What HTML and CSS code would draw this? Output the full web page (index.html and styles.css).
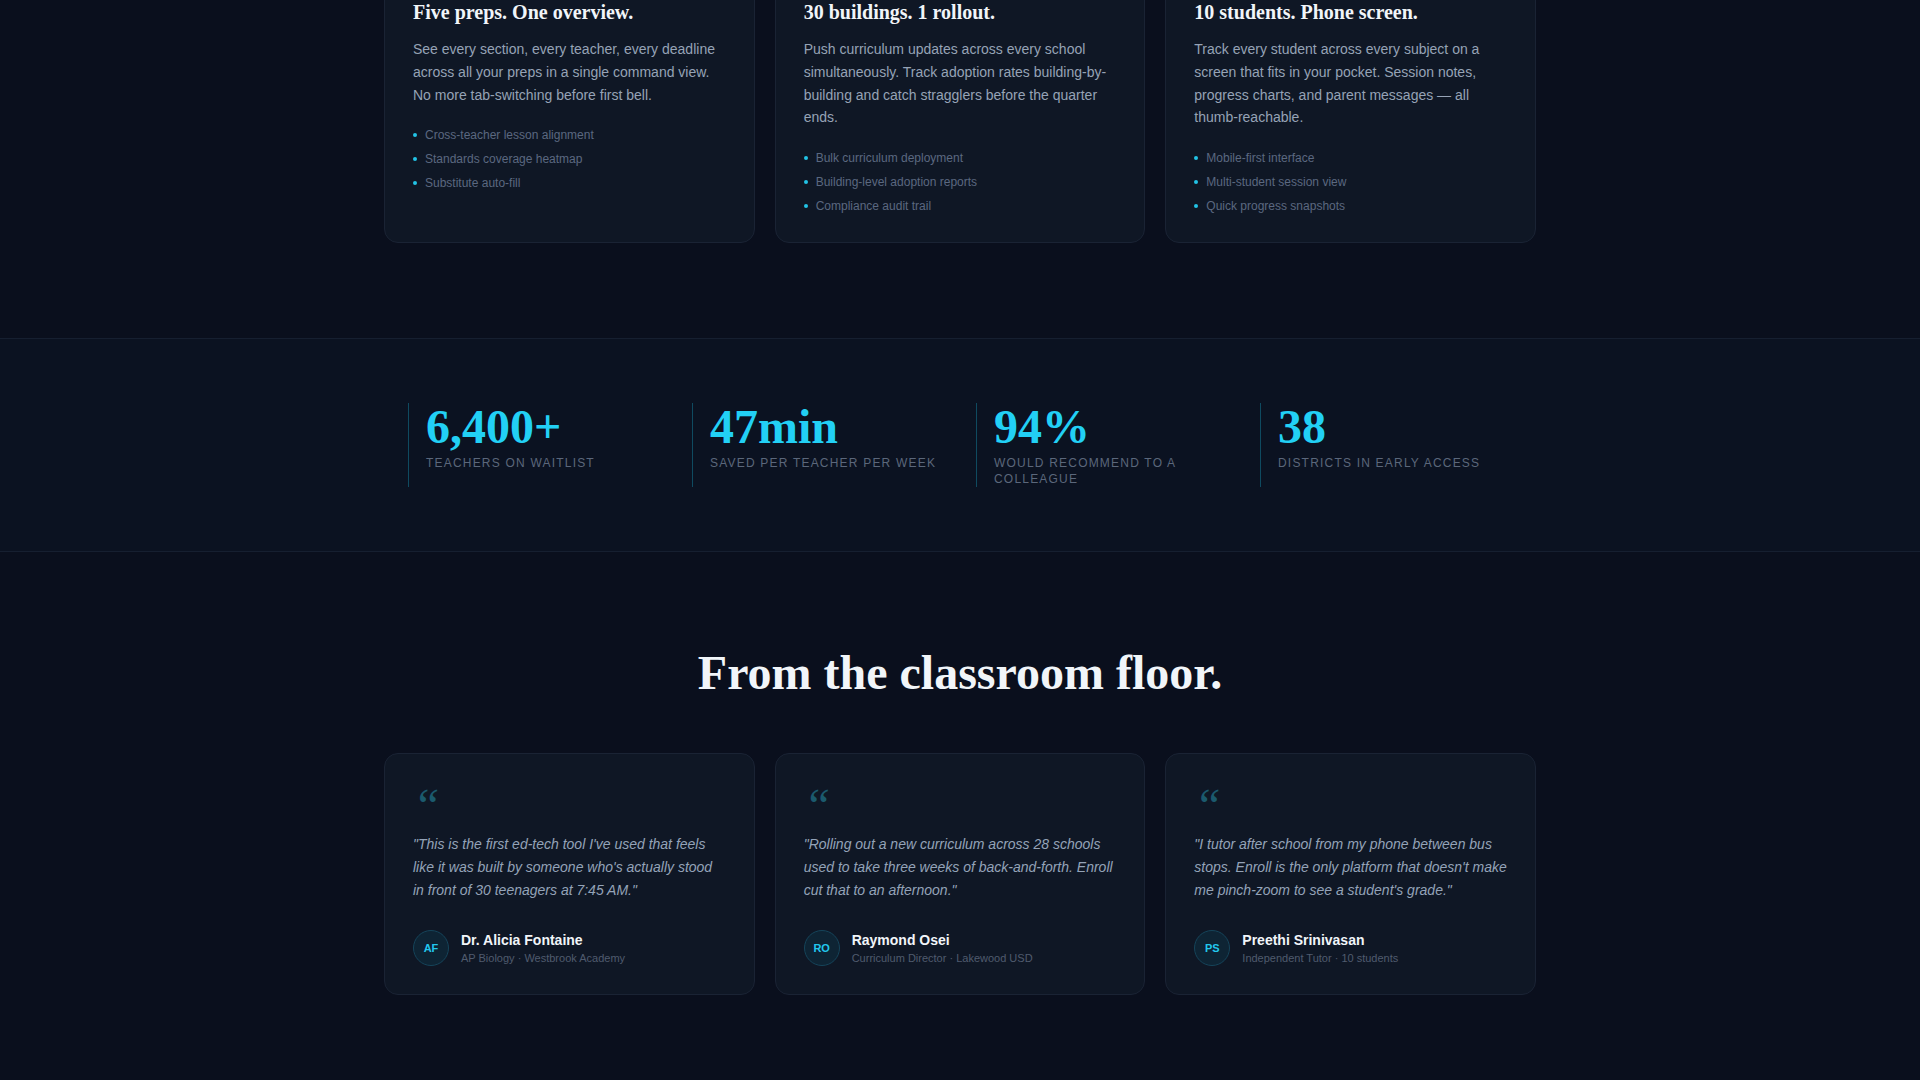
FILE: index.html
```html
<!DOCTYPE html>
<html lang="en">
<head>
<meta charset="utf-8">
<title>Enroll</title>
<link rel="stylesheet" href="styles.css">
</head>
<body>
<section class="features">
  <div class="container grid3">
    <div class="card fcard">
      <h3 class="card-title">Five preps. One overview.</h3>
      <p class="card-text">See every section, every teacher, every deadline across all your preps in a single command view. No more tab-switching before first bell.</p>
      <ul class="points">
        <li>Cross-teacher lesson alignment</li>
        <li>Standards coverage heatmap</li>
        <li>Substitute auto-fill</li>
      </ul>
    </div>
    <div class="card fcard">
      <h3 class="card-title">30 buildings. 1 rollout.</h3>
      <p class="card-text">Push curriculum updates across every school simultaneously. Track adoption rates building-by-building and catch stragglers before the quarter ends.</p>
      <ul class="points">
        <li>Bulk curriculum deployment</li>
        <li>Building-level adoption reports</li>
        <li>Compliance audit trail</li>
      </ul>
    </div>
    <div class="card fcard">
      <h3 class="card-title">10 students. Phone screen.</h3>
      <p class="card-text">Track every student across every subject on a screen that fits in your pocket. Session notes, progress charts, and parent messages — all thumb-reachable.</p>
      <ul class="points">
        <li>Mobile-first interface</li>
        <li>Multi-student session view</li>
        <li>Quick progress snapshots</li>
      </ul>
    </div>
  </div>
</section>

<section class="stats">
  <div class="container stats-grid">
    <div class="stat">
      <div class="stat-num">6,400+</div>
      <div class="stat-label">Teachers on waitlist</div>
    </div>
    <div class="stat">
      <div class="stat-num">47min</div>
      <div class="stat-label">Saved per teacher per week</div>
    </div>
    <div class="stat">
      <div class="stat-num">94%</div>
      <div class="stat-label">Would recommend to a colleague</div>
    </div>
    <div class="stat">
      <div class="stat-num">38</div>
      <div class="stat-label">Districts in early access</div>
    </div>
  </div>
</section>

<section class="testimonials">
  <h2 class="section-title">From the classroom floor.</h2>
  <div class="container grid3">
    <div class="card tcard">
      <div class="qmark">&ldquo;</div>
      <p class="quote">"This is the first ed-tech tool I've used that feels like it was built by someone who's actually stood in front of 30 teenagers at 7:45 AM."</p>
      <div class="author">
        <div class="avatar">AF</div>
        <div class="who">
          <div class="name">Dr. Alicia Fontaine</div>
          <div class="role">AP Biology · Westbrook Academy</div>
        </div>
      </div>
    </div>
    <div class="card tcard">
      <div class="qmark">&ldquo;</div>
      <p class="quote">"Rolling out a new curriculum across 28 schools used to take three weeks of back-and-forth. Enroll cut that to an afternoon."</p>
      <div class="author">
        <div class="avatar">RO</div>
        <div class="who">
          <div class="name">Raymond Osei</div>
          <div class="role">Curriculum Director · Lakewood USD</div>
        </div>
      </div>
    </div>
    <div class="card tcard">
      <div class="qmark">&ldquo;</div>
      <p class="quote">"I tutor after school from my phone between bus stops. Enroll is the only platform that doesn't make me pinch-zoom to see a student's grade."</p>
      <div class="author">
        <div class="avatar">PS</div>
        <div class="who">
          <div class="name">Preethi Srinivasan</div>
          <div class="role">Independent Tutor · 10 students</div>
        </div>
      </div>
    </div>
  </div>
</section>
</body>
</html>
```

FILE: styles.css
```css
* { box-sizing: border-box; }

html, body {
  margin: 0;
  padding: 0;
  background: #0a0f1d;
  font-family: "Liberation Sans", Arial, sans-serif;
  color: #94a3b8;
}

.container {
  width: 1152px;
  margin: 0 auto;
}

.grid3 {
  display: grid;
  grid-template-columns: repeat(3, 1fr);
  gap: 20px;
}

.features {
  margin-top: -30px;
  padding-bottom: 95px;
}

.card {
  background: #0f1725;
  border: 1px solid #1a2334;
  border-radius: 14px;
  padding: 28px;
}

.fcard {
  padding-bottom: 27px;
}

.card-title {
  margin: 0 0 13px;
  font-family: "Liberation Serif", "Times New Roman", serif;
  font-weight: 700;
  font-size: 20px;
  line-height: 26px;
  color: #f1f5f9;
}

.card-text {
  margin: 0 0 20px;
  font-size: 14px;
  line-height: 22.8px;
  color: #96a3b6;
}

.points {
  list-style: none;
  margin: 0;
  padding: 0;
  display: flex;
  flex-direction: column;
  gap: 6px;
}

.points li {
  display: flex;
  align-items: center;
  gap: 8px;
  font-size: 12px;
  line-height: 18px;
  color: #5b6880;
}

.points li::before {
  content: "";
  width: 4px;
  height: 4px;
  border-radius: 50%;
  background: #22c3e6;
  flex: none;
}

.stats {
  background: #0b1221;
  border-top: 1px solid #161f30;
  border-bottom: 1px solid #161f30;
  padding: 64px 0;
}

.stats-grid {
  padding: 0 24px;
  display: grid;
  grid-template-columns: repeat(4, 1fr);
  gap: 32px;
}

.stat {
  border-left: 1px solid #0f4a60;
  padding-left: 17px;
}

.stat-num {
  font-family: "Liberation Serif", "Times New Roman", serif;
  font-weight: 700;
  font-size: 48px;
  line-height: 1;
  color: #22d0f5;
  margin-bottom: 4px;
}

.stat-label {
  font-size: 12px;
  line-height: 16px;
  letter-spacing: 0.1em;
  text-transform: uppercase;
  color: #5b677b;
}

.testimonials {
  padding: 95px 0 96px;
}

.section-title {
  margin: 0 0 53px;
  text-align: center;
  font-family: "Liberation Serif", "Times New Roman", serif;
  font-weight: 700;
  font-size: 48px;
  line-height: 1.1;
  color: #f1f5f9;
}

.qmark {
  font-family: "Liberation Serif", "Times New Roman", serif;
  font-style: italic;
  font-size: 48px;
  line-height: 1;
  height: 48px;
  color: #1b5a6d;
  margin-bottom: 3px;
}

.quote {
  margin: 0 0 29px;
  font-size: 14px;
  line-height: 22.8px;
  font-style: italic;
  color: #94a3b8;
}

.author {
  display: flex;
  align-items: center;
  gap: 12px;
}

.avatar {
  width: 36px;
  height: 36px;
  border-radius: 50%;
  background: #0e2434;
  border: 1px solid #15445a;
  color: #22c8ee;
  font-size: 11px;
  font-weight: 700;
  display: flex;
  align-items: center;
  justify-content: center;
  flex: none;
}

.name {
  font-size: 14px;
  line-height: 20px;
  font-weight: 700;
  color: #f1f5f9;
}

.role {
  font-size: 11px;
  line-height: 16px;
  color: #4f5b6e;
}
```
